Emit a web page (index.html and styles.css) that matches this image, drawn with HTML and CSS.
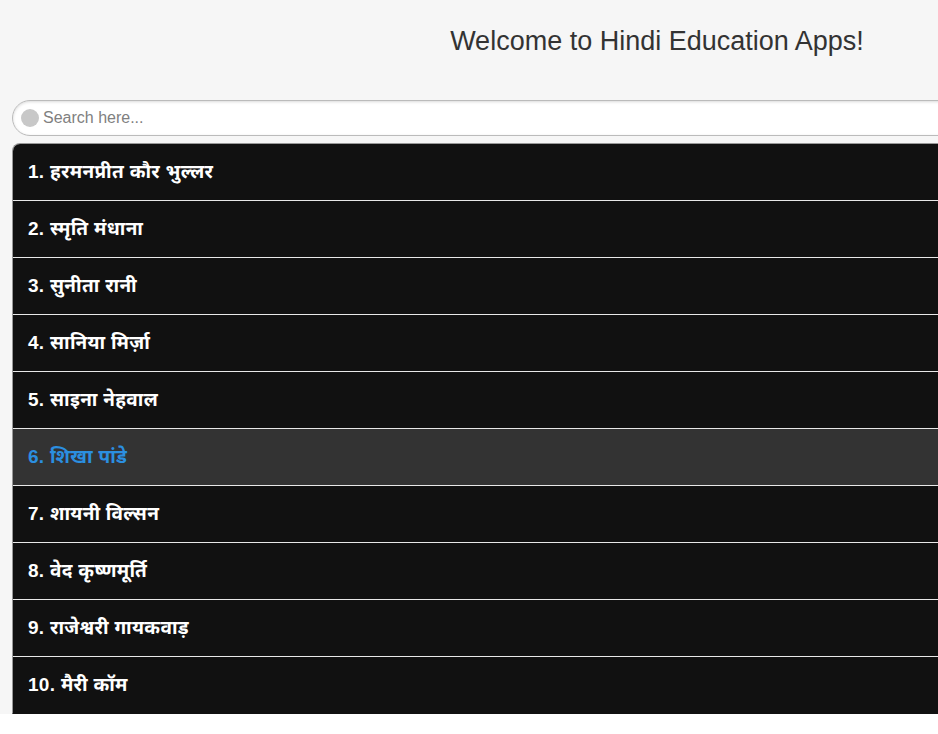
FILE: index.html
```html
<!DOCTYPE html>
<html lang="hi">
<head>
<meta charset="utf-8">
<title>Hindi Education Apps</title>
<link rel="stylesheet" href="styles.css">
</head>
<body>
<div class="page">
  <header class="header">
    <h1 class="title">Welcome to Hindi Education Apps!</h1>
  </header>
  <div class="content">
    <div class="search">
      <span class="search-icon"></span>
      <input class="search-input" type="text" placeholder="Search here...">
    </div>
    <ul class="list">
      <li class="item">1. हरमनप्रीत कौर भुल्लर</li>
      <li class="item">2. स्मृति मंधाना</li>
      <li class="item">3. सुनीता रानी</li>
      <li class="item">4. सानिया मिर्ज़ा</li>
      <li class="item">5. साइना नेहवाल</li>
      <li class="item active">6. शिखा पांडे</li>
      <li class="item">7. शायनी विल्सन</li>
      <li class="item">8. वेद कृष्णमूर्ति</li>
      <li class="item">9. राजेश्वरी गायकवाड़</li>
      <li class="item">10. मैरी कॉम</li>
    </ul>
  </div>
</div>
</body>
</html>
```
FILE: styles.css
```css
html, body {
  margin: 0;
  padding: 0;
  background: #ffffff;
  overflow: hidden;
}
.page {
  width: 1314px;
  background: #f6f6f6;
}
.header {
  height: 100px;
  display: flex;
  justify-content: center;
}
.title {
  margin: 0;
  padding-top: 24px;
  font-family: "Liberation Sans", Arial, sans-serif;
  font-weight: normal;
  font-size: 27px;
  line-height: 34px;
  color: #333333;
}
.content {
  padding: 0 0 0 12px;
}
.search {
  display: flex;
  align-items: center;
  height: 34px;
  border: 1px solid #bbbbbb;
  border-radius: 18px;
  background: #ffffff;
  box-shadow: inset 0 1px 3px rgba(0,0,0,0.15);
  padding-left: 8px;
}
.search-icon {
  width: 18px;
  height: 18px;
  border-radius: 50%;
  background: #c8c8c8;
  flex: none;
}
.search-input {
  border: none;
  outline: none;
  background: transparent;
  margin-left: 4px;
  padding: 0;
  font-family: "Liberation Sans", Arial, sans-serif;
  font-size: 16px;
  color: #333;
  flex: 1;
}
.search-input::placeholder {
  color: #808080;
}
.list {
  list-style: none;
  margin: 7px 0 0 0;
  padding: 0;
  border: 1px solid #999;
  border-right: none;
  border-bottom: 1px solid #111;
  border-radius: 8px 0 0 0;
  overflow: hidden;
}
.item {
  height: 57px;
  box-sizing: border-box;
  display: flex;
  align-items: center;
  padding: 3px 0 0 15px;
  background: #111111;
  color: #ffffff;
  font-family: "Liberation Sans", "Noto Sans Devanagari", "Noto Sans", sans-serif;
  font-weight: bold;
  font-size: 19px;
  letter-spacing: 0.3px;
  border-top: 1px solid #e8e8e8;
}
.item:first-child {
  border-top: none;
  height: 56px;
}
.item.active {
  background: #333333;
  color: #2b8fe0;
}
```
